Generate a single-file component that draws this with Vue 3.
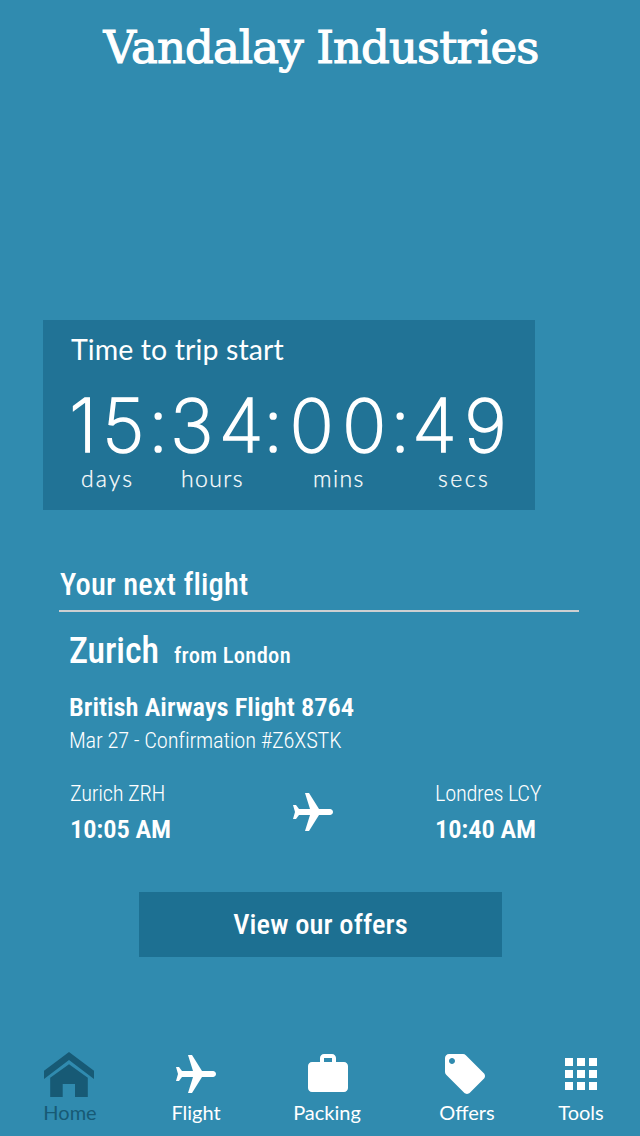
<script setup>
const units = [
  { value: '15', label: 'days' },
  { value: '34', label: 'hours' },
  { value: '00', label: 'mins' },
  { value: '49', label: 'secs' },
]
const tabs = [
  { id: 'home', label: 'Home' },
  { id: 'flight', label: 'Flight' },
  { id: 'packing', label: 'Packing' },
  { id: 'offers', label: 'Offers' },
  { id: 'tools', label: 'Tools' },
]
const plane = 'M21 16v-2l-8-5V3.5c0-.83-.67-1.5-1.5-1.5S10 2.67 10 3.5V9l-8 5v2l8-2.5V19l-2 1.5V22l3.5-1 3.5 1v-1.5L13 19v-5.5l8 2.5z'
</script>

<template>
  <main class="screen">
    <header class="brand"><h1>Vandalay Industries</h1></header>

    <section class="countdown">
      <h2 class="countdown-title">Time to trip start</h2>
      <div class="digits">
        <template v-for="(u, i) in units" :key="u.label">
          <span v-if="i" class="colon">:</span>
          <span :class="'v-' + u.label">{{ u.value }}</span>
        </template>
      </div>
      <div class="labels">
        <span v-for="u in units" :key="u.label" :class="'l-' + u.label">{{ u.label }}</span>
      </div>
    </section>

    <section class="next">
      <h2 class="next-title">Your next flight</h2>
      <div class="details">
        <div class="route">
          <span class="city">Zurich</span>
          <span class="origin">from London</span>
        </div>
        <div class="flight-no">British Airways Flight 8764</div>
        <div class="meta">Mar 27 - Confirmation #Z6XSTK</div>
        <div class="legs">
          <div class="leg">
            <span class="place">Zurich ZRH</span>
            <span class="time">10:05 AM</span>
          </div>
          <svg class="leg-plane" width="48" height="48" viewBox="0 0 24 24">
            <path :d="plane" transform="rotate(90 12 12)" fill="#fff" />
          </svg>
          <div class="leg">
            <span class="place">Londres LCY</span>
            <span class="time">10:40 AM</span>
          </div>
        </div>
      </div>
    </section>

    <button class="cta">View our offers</button>

    <nav class="tabs">
      <a v-for="tab in tabs" :key="tab.id" class="tab" :class="tab.id">
        <svg v-if="tab.id === 'home'" class="icon" width="50" height="48" viewBox="0 0 50 48" fill="currentColor">
          <path d="M25 2 50 20.7V29L25 10 0 29V20.7Z" />
          <path d="M25 14.3 43.8 27.7V47H31V34H18.7V47H6.2V27.7Z" />
        </svg>
        <svg v-else class="icon" width="48" height="48" viewBox="0 0 24 24" fill="currentColor">
          <path v-if="tab.id === 'flight'" :d="plane" transform="translate(0 .5) rotate(90 12 12)" />
          <path v-else-if="tab.id === 'packing'" d="M20 6h-4V4c0-1.11-.89-2-2-2h-4c-1.11 0-2 .89-2 2v2H4c-1.11 0-1.99.89-1.99 2L2 19c0 1.11.89 2 2 2h16c1.11 0 2-.89 2-2V8c0-1.11-.89-2-2-2zm-6 0h-4V4h4v2z" />
          <path v-else-if="tab.id === 'offers'" d="M21.41 11.58l-9-9C12.05 2.22 11.55 2 11 2H4c-1.1 0-2 .9-2 2v7c0 .55.22 1.05.59 1.42l9 9c.36.36.86.58 1.41.58.55 0 1.05-.22 1.41-.59l7-7c.37-.36.59-.86.59-1.41 0-.55-.23-1.06-.59-1.42zM5.5 7C4.67 7 4 6.33 4 5.5S4.67 4 5.5 4 7 4.67 7 5.5 6.33 7 5.5 7z" />
          <path v-else d="M4 8h4V4H4v4zm6 12h4v-4h-4v4zm-6 0h4v-4H4v4zm0-6h4v-4H4v4zm6 0h4v-4h-4v4zm6-10v4h4V4h-4zm-6 4h4V4h-4v4zm6 6h4v-4h-4v4zm0 6h4v-4h-4v4z" />
        </svg>
        <span class="tab-label">{{ tab.label }}</span>
      </a>
    </nav>
  </main>
</template>

<style scoped>
.screen {
  width: 640px;
  height: 1136px;
  display: flex;
  flex-direction: column;
  overflow: hidden;
  background: #308baf;
  color: #fff;
  font-family: Roboto, sans-serif;
  white-space: nowrap;
}
h1, h2 { margin: 0; font-weight: 400; }
.brand { height: 320px; flex: none; }
h1 {
  padding: 18px 0 0 103.5px;
  font: 400 45px/60px "DejaVu Serif", serif;
  letter-spacing: -0.9px;
  -webkit-text-stroke: 1.1px #fff;
}
.countdown {
  flex: none;
  width: 492px;
  height: 190px;
  margin-left: 43px;
  box-sizing: border-box;
  padding-left: 26px;
  background: #217396;
}
.countdown-title {
  padding: 9px 0 0 2px;
  font: 400 28.5px/40px Lato, sans-serif;
  letter-spacing: 0.1px;
}
.digits {
  display: grid;
  grid-template-columns: 79px 22px 93px 26.5px 100.5px 22px 1fr;
  height: 60px;
  margin-top: 27px;
  font: 200 73.5px/60px Inter, sans-serif;
  letter-spacing: 5px;
  -webkit-text-stroke: 1.5px #fff;
}
.colon { letter-spacing: 0; }
.v-mins { letter-spacing: 8px; }
.v-secs { letter-spacing: 7px; }
.labels {
  display: grid;
  grid-template-columns: 100px 132px 125px 80px;
  margin-top: 7px;
  padding-left: 12px;
  font: 300 23px/30px Lato, sans-serif;
  letter-spacing: 1.4px;
  -webkit-text-stroke: 0.25px #fff;
}
.l-days { letter-spacing: 2.1px; }
.l-secs { letter-spacing: 2.5px; }
.next { flex: none; margin: 50px 61px 0 59px; height: 332px; }
.next-title {
  height: 50px;
  padding-left: 1px;
  font-size: 30.5px;
  line-height: 50px;
  font-weight: 500;
  font-stretch: condensed;
  letter-spacing: 0.2px;
  border-bottom: 2px solid #cdcfd1;
}
.details { padding-left: 11px; font-stretch: condensed; }
.route { display: flex; align-items: baseline; gap: 15px; height: 59px; padding-top: 9px; margin-left: -1px; }
.city { font-size: 36px; line-height: 60px; font-weight: 500; letter-spacing: -0.1px; }
.origin { font-size: 22.5px; font-weight: 500; letter-spacing: 0.3px; }
.flight-no { margin: 10px 0 0 -1px; font-size: 26.5px; line-height: 34px; font-weight: 600; }
.meta { margin-left: -1px; font-size: 22.5px; line-height: 32px; font-weight: 300; letter-spacing: -0.2px; }
.legs { display: grid; grid-template-columns: 218px 147px 1fr; margin-top: 19px; }
.leg { display: flex; flex-direction: column; }
.place { font-size: 22.5px; line-height: 36px; font-weight: 300; letter-spacing: -0.3px; }
.time { font-size: 26.5px; line-height: 35px; font-weight: 600; letter-spacing: -0.15px; }
.leg-plane { margin: 14px 0 0 0.5px; }
.cta {
  flex: none;
  width: 363px;
  height: 65px;
  margin-left: 139px;
  border: 0;
  padding: 0;
  background: #1d7092;
  color: #fff;
  font: 500 28.5px/65px Roboto, sans-serif;
  font-stretch: condensed;
  letter-spacing: 0.1px;
}
.tabs {
  display: grid;
  grid-template-columns: 140px 112px 150px 130px 98px;
  margin-top: 93px;
  font: 400 20px/26px Lato, sans-serif;
}
.tab { display: flex; flex-direction: column; align-items: center; }
.home { color: #175a75; }
.home .icon { margin-right: 2px; }
.flight .icon { margin-right: 1px; }
.packing .icon { margin-left: 2px; }
.offers .icon { margin-right: 4px; }
.tab-label { margin-top: 1px; }
</style>
